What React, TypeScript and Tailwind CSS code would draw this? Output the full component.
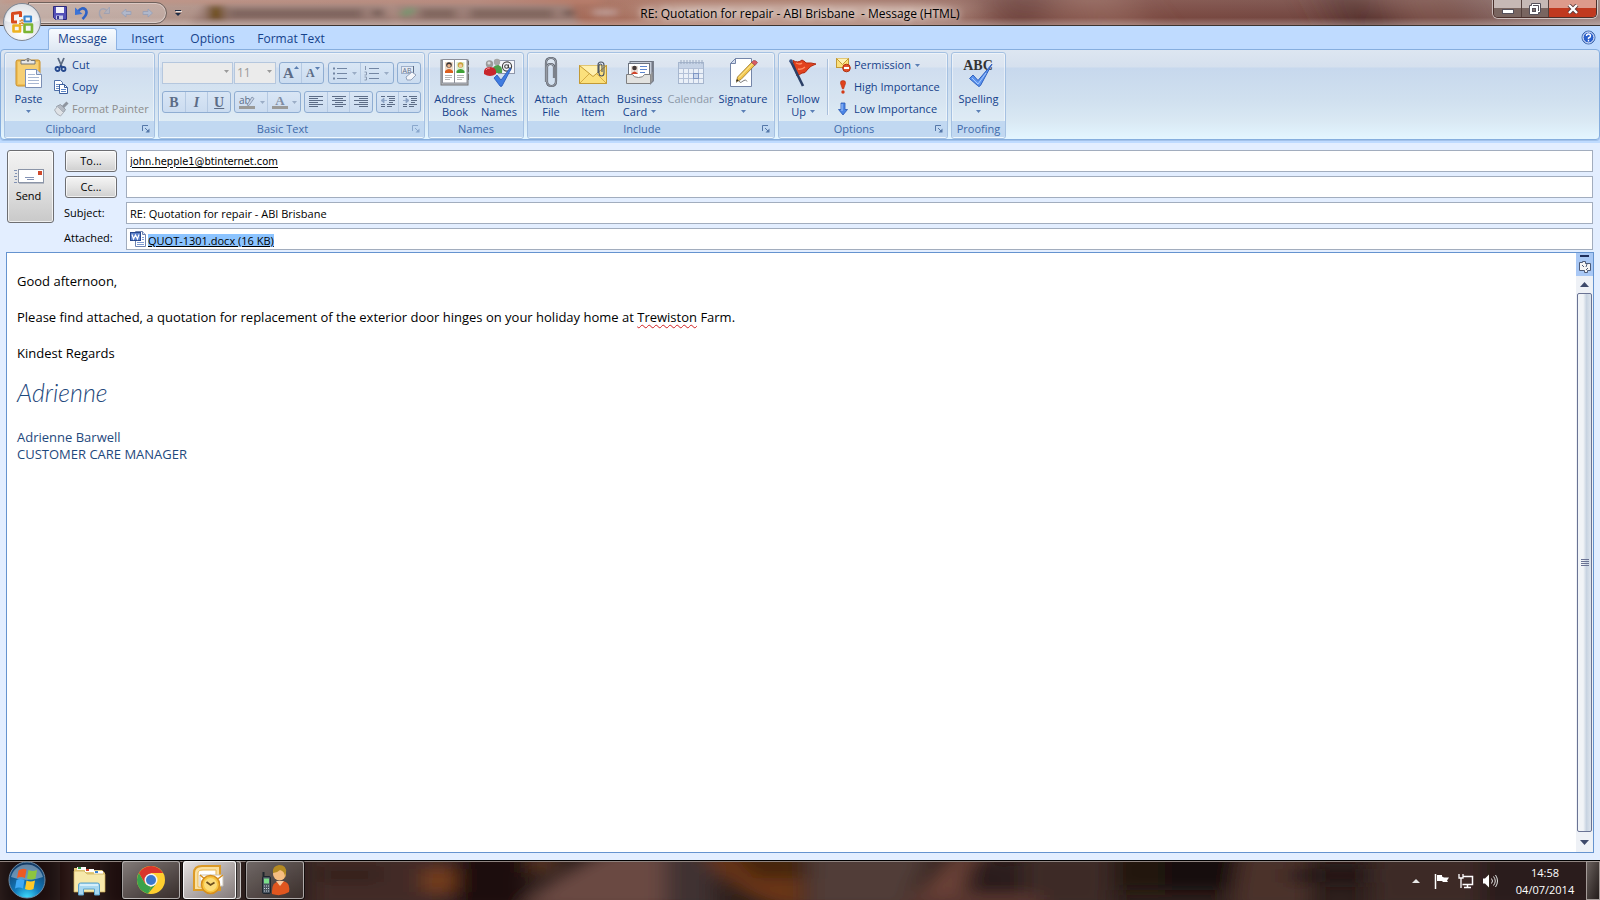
import React from 'react';

type Kids = { children?: React.ReactNode };

const Caret = ({ cls = 'fill-[#5b7fb5]' }: { cls?: string }) => (
  <svg width="5" height="3" viewBox="0 0 5 3" className={cls} aria-hidden="true"><path d="M0 0h5L2.5 3z" /></svg>
);

/* ---------- large ribbon icons ---------- */

const PasteIcon = () => (
  <svg width="32" height="32" viewBox="0 0 32 32" aria-hidden="true">
    <rect x="3" y="3" width="24" height="26" rx="2" fill="#efbe55" stroke="#c98f2b" />
    <rect x="5" y="5" width="20" height="22" fill="#f6cf74" />
    <path d="M8 7V3.500h4Q15-.5 18 3.500h4V7z" fill="#e8e8e8" stroke="#777" />
    <circle cx="15" cy="3.500" r="1.200" fill="#777" />
    <path d="M12.500 12.500h11l5 5V30.500h-16z" fill="#fff" stroke="#7b8fb5" />
    <path d="M23.500 12.500v5h5" fill="#dbe4f3" stroke="#7b8fb5" />
    <path d="M15 17.500h7M15 20.500h11M15 23.500h11M15 26.500h11" stroke="#a9b8d2" />
  </svg>
);

const AddressIcon = () => (
  <svg width="32" height="32" viewBox="0 0 32 32" aria-hidden="true">
    <path d="M27 4h3v4h-3zM27 10h3v5h-3zM27 17h3v6h-3z" fill="#6b6b6b" />
    <rect x="2" y="3" width="27" height="25" fill="#b9bcc2" stroke="#777" />
    <path d="M3.500 2.500H15.500V26H3.500zM15.500 2.500H28V26H15.500z" fill="#fff" stroke="#8b8f98" />
    <rect x="6" y="5" width="8" height="11" fill="#f0dcc8" /><rect x="17.500" y="5" width="8" height="11" fill="#dcefd2" />
    <circle cx="10" cy="8" r="2.800" fill="#3b3432" /><circle cx="10" cy="8.800" r="1.800" fill="#e9b48d" />
    <path d="M6 16v-2q4-4 8 0v2z" fill="#dc5f1e" />
    <circle cx="21.500" cy="8" r="2.800" fill="#c9a13a" /><circle cx="21.500" cy="8.800" r="1.800" fill="#f1c9a0" />
    <path d="M17.500 16v-2q4-4 8 0v2z" fill="#3fa137" />
    <path d="M6 18.500h7M6 20.500h7M6 22.500h5M18 18.500h7M18 20.500h7M18 22.500h5" stroke="#b5b5b5" />
  </svg>
);

const CheckNamesIcon = () => (
  <svg width="32" height="32" viewBox="0 0 32 32" aria-hidden="true">
    <rect x="15.500" y="3.500" width="16" height="13" fill="#f7f7fb" stroke="#8f97ab" />
    <circle cx="24" cy="9.500" r="4.600" fill="none" stroke="#444" strokeWidth="1.100" /><circle cx="23.500" cy="9.500" r="1.800" fill="none" stroke="#444" strokeWidth="1.100" />
    <path d="M25.500 7.500v3.500h2.500" fill="none" stroke="#444" />
    <circle cx="14" cy="5" r="3.200" fill="#a6a6a6" /><path d="M9 16q0-8 6-8 5 1 4 8z" fill="#4d9f4a" />
    <circle cx="6.500" cy="7" r="3.700" fill="#9a9a9a" /><circle cx="6" cy="6" r="1.600" fill="#d8d8d8" />
    <path d="M1 17q-1-7 6-7t6 7q-6 4-12 0z" fill="#c8262c" /><path d="M3 13q1-2 4-2" stroke="#f09090" fill="none" />
    <path d="M11 21l3-3 4 5 9-12 1 1-9 17q-1 1-2 0z" fill="#3f7be0" stroke="#2356b5" strokeWidth=".8" />
  </svg>
);

const ClipPath = "M11 25V6q0-5 5-5t5 5v18q0 5-4.500 5T12 24.500V10q0-3 3.500-3T19 10v11";
const AttachFileIcon = () => (
  <svg width="32" height="32" viewBox="0 0 32 32" aria-hidden="true">
    <path d={ClipPath} fill="none" stroke="#555b66" strokeWidth="2.200" /><path d={ClipPath} fill="none" stroke="#c5cad2" strokeWidth=".7" />
  </svg>
);

const AttachItemIcon = () => (
  <svg width="32" height="32" viewBox="0 0 32 32" aria-hidden="true">
    <rect x="2.500" y="8.500" width="27" height="18" fill="#fbe07c" stroke="#c39a35" />
    <path d="M2.500 26.500l10-10M29.500 26.500l-10-10" stroke="#d6ac45" /><path d="M2.500 8.500L16 19.500 29.500 8.500" fill="#fff0ae" stroke="#c39a35" />
    <path d="M21 16V8q0-3 3-3t3 3v8q0 3-2.500 3T22 16V9q0-2 1.500-2T25 9v6" fill="none" stroke="#4c5563" strokeWidth="1.100" />
  </svg>
);

const BusinessIcon = () => (
  <svg width="32" height="32" viewBox="0 0 32 32" aria-hidden="true">
    <path d="M8 4h22v20l-4 4V8z" fill="#7a808c" /><rect x="6" y="4.500" width="22" height="15" fill="#c7ced9" stroke="#6c7380" />
    <rect x="4.500" y="6.500" width="21" height="15" fill="#fff" stroke="#6c7380" />
    <rect x="7" y="9" width="7" height="8" fill="#e9ddd5" /><circle cx="10.500" cy="11" r="2.300" fill="#443a38" /><path d="M7 17q3.500-5 7 0z" fill="#d1452b" />
    <path d="M16 9.500h7M16 12.500h7M16 15.500h5" stroke="#5c86cf" />
    <path d="M2.500 17.500h6q1 3 6 3t6-3h6v9h-24z" fill="#e2e2e0" stroke="#7f7f80" /><path d="M26.500 17.500l2-3v9l-2 3z" fill="#999" />
  </svg>
);

const CalendarIcon = () => (
  <svg width="32" height="32" viewBox="0 0 32 32" aria-hidden="true">
    <rect x="3.500" y="5.500" width="25" height="21" fill="#eaf0f8" stroke="#a6b6ce" /><path d="M4 6h24v5H4z" fill="#c6d3e6" />
    <path d="M6 3v4M9 3v4M12 3v4M15 3v4M18 3v4M21 3v4M24 3v4M27 3v4" stroke="#9aa9c0" />
    <path d="M4 11.500h24M4 16.500h24M4 21.500h24M8.500 11v15M13.500 11v15M18.500 11v15M23.500 11v15" stroke="#b3c1d8" />
    <rect x="18.500" y="16.500" width="5" height="5" fill="#cad7ec" stroke="#7e96c4" />
  </svg>
);

const SignatureIcon = () => (
  <svg width="32" height="32" viewBox="0 0 32 32" aria-hidden="true">
    <path d="M8.500 1.500h16v28H3.500v-23z" fill="#fff" stroke="#7485a8" /><path d="M3.500 6.500h5v-5z" fill="#d5deee" stroke="#7485a8" />
    <path d="M9 25.500q3-3 3.500-1t3.500-.5 4 .5" fill="none" stroke="#555" strokeWidth=".8" />
    <path d="M10.500 20L25 5l3 3L14 22.500l-4.500 2z" fill="#f3c64c" stroke="#8b6921" strokeWidth=".7" /><path d="M12 20.500L26 6.500" stroke="#fff0a8" />
    <path d="M24.500 5.500l2-2q2.500-.5 4 2L28 8.500z" fill="#d85b62" stroke="#8f3b40" strokeWidth=".6" /><path d="M9 24.500l1-2.500 1.500 1.500z" fill="#222" />
  </svg>
);

const FlagIcon = () => (
  <svg width="32" height="32" viewBox="0 0 32 32" aria-hidden="true">
    <path d="M6 3.500q5 3 9-.5 4 2 4 3 5-.5 10 1-6 2-8 5-3 5-6 4-3 2-5 3z" fill="#e2421e" stroke="#b2290f" />
    <path d="M9 6q4 2 6 0M11 12q4 1 7-2" stroke="#ff8b62" strokeWidth="1.300" fill="none" />
    <path d="M3.500 3.500L16 29" stroke="#2b3f66" strokeWidth="2.600" /><circle cx="4" cy="4" r="1.800" fill="#3c5585" />
  </svg>
);

const SpellIcon = () => (
  <svg width="34" height="32" viewBox="0 0 34 32" aria-hidden="true">
    <text x="16" y="13" textAnchor="middle" fontFamily="Liberation Serif, serif" fontWeight="700" fontSize="14" fill="#333">ABC</text>
    <path d="M7.500 21.500l3.500-3.500 5 5.500 14-16.500-11.500 21.500q-1.500 2-3 0z" fill="#5b93ee" stroke="#2f60bd" /><path d="M10 21l6 6 8-11" stroke="#a5c8ff" fill="none" />
  </svg>
);

/* ---------- small ribbon icons ---------- */

const S = ({ children }: Kids) => <svg width="16" height="16" viewBox="0 0 16 16" aria-hidden="true" className="shrink-0">{children}</svg>;

const CutIcon = () => (
  <S><path d="M4 1l4 9M10 1L6 10" stroke="#5d6b82" strokeWidth="1.800" /><circle cx="3.500" cy="12" r="2" fill="none" stroke="#26498e" strokeWidth="1.800" /><circle cx="9.500" cy="12" r="2" fill="none" stroke="#26498e" strokeWidth="1.800" /><path d="M5 11l3-2M8.500 10.500L6 8.500" stroke="#26498e" strokeWidth="1.500" /></S>
);
const CopyIcon = () => (
  <S><path d="M.5 1.500h6l2 2v8h-8z" fill="#fff" stroke="#4e6fa8" /><path d="M2 5.500h4M2 7.500h4M2 9.500h3" stroke="#6e8fc4" /><path d="M5.500 5.500h5l3 3v6h-8z" fill="#fff" stroke="#3c5f9d" /><path d="M10.500 5.500v3h3" fill="none" stroke="#3c5f9d" /><path d="M7 10.500h5M7 12.500h5" stroke="#5b84c6" /></S>
);
const PainterIcon = () => (
  <S><path d="M13.500 1.500l-5 5" stroke="#8e959f" strokeWidth="3" /><path d="M6.500 3.500l5 5-2 3-7-6z" fill="#b4bac3" stroke="#979ea9" /><path d="M3.500 5.500l6 6-3 3.500q-4-1-6-6z" fill="#dfe2e6" stroke="#aab0b9" /></S>
);
const PermissionIcon = () => (
  <S><rect x=".5" y="1.500" width="12" height="9" fill="#fbdf7b" stroke="#c39a35" /><path d="M.5 1.500l6 6 6-6" fill="#fff2b5" stroke="#c39a35" /><circle cx="10.500" cy="11" r="3.800" fill="#e2502c" stroke="#b0310f" /><path d="M8 11h5" stroke="#fff" strokeWidth="2" /></S>
);
const HighIcon = () => (
  <S><path d="M7 1.500q3 0 2.500 3L7.500 10h-1L4.500 4.500q-.5-3 2.500-3z" fill="#e0431d" stroke="#b5310f" strokeWidth=".6" /><circle cx="7" cy="13" r="1.700" fill="#d23a17" /></S>
);
const LowIcon = () => (
  <S><path d="M5 2h4v6.500h2.500L7 14 2.500 8.500H5z" fill="#4c86e6" stroke="#2a58b4" strokeWidth=".8" /><path d="M6 3v7" stroke="#a6c7ff" /></S>
);
const Launcher = ({ dim }: { dim?: boolean }) => (
  <svg width="8" height="8" viewBox="0 0 8 8" className={dim ? 'opacity-50' : ''} aria-hidden="true"><path d="M.5 6V.500H6M3 3l3.500 3.500" stroke="#5577a8" fill="none" /><path d="M7.500 3.500v4h-4z" fill="#5577a8" /></svg>
);
const Bullets = ({ num }: { num?: boolean }) => (
  <S><path d="M5 3.500h10M5 8.500h10M5 13.500h10" stroke="#7386a3" />{num ? <path d="M1.500 1v4M.5 7h2v3h-2M.5 12h2v3h-2" stroke="#8a9ab2" fill="none" /> : <path d="M1 2.500h2v2H1zM1 7.500h2v2H1zM1 12.500h2v2H1z" fill="#7386a3" />}</S>
);
const AlignLeft = () => <S><path d="M1 2.500h14M1 4.500h9M1 6.500h14M1 8.500h9M1 10.500h14M1 12.500h9" stroke="#5c6c86" /></S>;
const AlignCenter = () => <S><path d="M1 2.500h14M4 4.500h8M1 6.500h14M4 8.500h8M1 10.500h14M4 12.500h8" stroke="#5c6c86" /></S>;
const AlignRight = () => <S><path d="M1 2.500h14M6 4.500h9M1 6.500h14M6 8.500h9M1 10.500h14M6 12.500h9" stroke="#5c6c86" /></S>;
const Indent = ({ inc }: { inc?: boolean }) => (
  <S><path d="M1 2.500h4M7 2.500h8M9 4.500h6M9 6.500h6M9 8.500h4M1 10.500h4M7 10.500h8M1 12.500h4M7 12.500h5" stroke="#5c6c86" /><path d={inc ? 'M1 6.500h4M4 4l3 2.500L4 9z' : 'M3 6.500h4M4 4L1 6.500 4 9z'} fill="#8ca2c4" stroke="#8ca2c4" strokeWidth=".8" /></S>
);

/* ---------- ribbon pieces ---------- */

const Group = ({ title, cls, launcher, dim, children }: Kids & { title: string; cls: string; launcher?: boolean; dim?: boolean }) => (
  <section aria-label={title} className={`flex shrink-0 flex-col overflow-hidden rounded-[3px] border border-[#a5c1e2] bg-white/15 shadow-[inset_0_0_0_1px_rgba(255,255,255,0.45)] ${cls}`}>
    <div className="flex h-[68px]">{children}</div>
    <div className={`relative flex h-4 items-center justify-center bg-[#c1d8f1] text-[11px] leading-4 text-[#3e6aaa] ${launcher ? 'pr-[18px]' : ''}`}>
      {title}
      {launcher && <button type="button" aria-label={`${title} dialog`} className="absolute right-1 top-1"><Launcher dim={dim} /></button>}
    </div>
  </section>
);

const Big = ({ icon, a, b, caret, cls, off }: { icon: React.ReactNode; a: string; b?: string; caret?: boolean; cls: string; off?: boolean }) => (
  <button type="button" disabled={off} className={`flex shrink-0 flex-col items-center pt-1 text-[11px] leading-[13px] whitespace-nowrap ${off ? 'text-[#8d99a8]' : 'text-[#15428b]'} ${cls}`}>
    {icon}
    <span className="mt-[3px]">{a}</span>
    {(b || caret) && <span className="flex h-[13px] items-center gap-1">{b}{caret && <Caret />}</span>}
  </button>
);

const Small = ({ icon, label, caret, off }: { icon: React.ReactNode; label: string; caret?: boolean; off?: boolean }) => (
  <button type="button" disabled={off} className={`flex h-[22px] items-center gap-0.5 text-[11px] whitespace-nowrap ${off ? 'text-[#8d8d8d]' : 'text-[#15428b]'}`}>
    {icon}<span>{label}</span>{caret && <span className="pl-0.5"><Caret /></span>}
  </button>
);

const Box = ({ children, cls }: Kids & { cls: string }) => (
  <div className={`flex h-[22px] items-stretch divide-x divide-[#b5c9e2] rounded-[3px] border border-[#8fadd2] bg-linear-to-b from-[#d9e6f5] to-[#cbdcf0] ${cls}`}>{children}</div>
);
const Tool = ({ label, children }: Kids & { label: string }) => (
  <button type="button" disabled aria-label={label} className="flex flex-1 items-center justify-center gap-1 text-[#5c6c86]">{children}</button>
);
const Gray = () => <Caret cls="fill-[#9badc6]" />;

const Ribbon = () => (
  <div className="flex h-[91px] gap-[3px] rounded-[4px] border border-[#86aede] bg-[linear-gradient(to_bottom,#dde6f1_0px,#d5e0ee_17px,#c7d8ed_18px,#d0e0ef_50px,#d9e8f3_70px,#e3f5ff_88px)] px-[3px] pt-0.5 shadow-[0_1px_0_#a3c2ea]">
    <Group title="Clipboard" cls="w-[151px]" launcher>
      <Big icon={<PasteIcon />} a="Paste" caret cls="w-[47px]" />
      <div className="flex flex-col pt-px pl-0.5">
        <Small icon={<CutIcon />} label="Cut" />
        <Small icon={<CopyIcon />} label="Copy" />
        <Small icon={<PainterIcon />} label="Format Painter" off />
      </div>
    </Group>
    <Group title="Basic Text" cls="w-[267px]" launcher dim>
      <div className="flex w-full flex-col gap-[7px] px-[3px] pt-[9px]">
        <div className="flex justify-between">
          <div className="flex gap-px">
            <label className="relative flex">
              <select disabled aria-label="Font" className="h-[22px] w-[71px] appearance-none border border-[#b5c7de] bg-[#ebebeb] opacity-100"><option></option></select>
              <span className="absolute right-1 top-2"><Caret cls="fill-[#9a9a9a]" /></span>
            </label>
            <label className="relative flex">
              <select disabled aria-label="Font size" className="h-[22px] w-[42px] appearance-none border border-[#b5c7de] bg-[#ebebeb] pl-0.5 text-[12px] text-[#9a9a9a] opacity-100"><option>11</option></select>
              <span className="absolute right-1 top-2"><Caret cls="fill-[#9a9a9a]" /></span>
            </label>
          </div>
          <Box cls="w-[45px]">
            <Tool label="Grow font"><span className="flex font-['Liberation_Serif',serif] text-[15px] font-bold">A<svg width="5" height="8" aria-hidden="true"><path d="M0 7h5L2.500 4z" fill="#5c7fb0" /></svg></span></Tool>
            <Tool label="Shrink font"><span className="flex font-['Liberation_Serif',serif] text-[12px] font-bold">A<svg width="5" height="8" aria-hidden="true"><path d="M0 3h5L2.500 6z" fill="#5c7fb0" /></svg></span></Tool>
          </Box>
          <Box cls="w-[66px]">
            <Tool label="Bullets"><Bullets /><Gray /></Tool>
            <Tool label="Numbering"><Bullets num /><Gray /></Tool>
          </Box>
          <Box cls="w-6">
            <Tool label="Clear formatting">
              <svg width="18" height="18" viewBox="0 0 18 18" aria-hidden="true"><rect x="1.500" y="2.500" width="12" height="7" fill="#e4ebf5" stroke="#9fb0ca" /><text x="2.500" y="8.500" fontSize="7" fontFamily="Open Sans, sans-serif" fill="#5c6c86">AB</text><path d="M13.500 2v8" stroke="#5c6c86" /><path d="M6 13l6-5 4 3-5 5H7z" fill="#f4f6fa" stroke="#93a2ba" /></svg>
            </Tool>
          </Box>
        </div>
        <div className="flex justify-between">
          <Box cls="w-[69px]">
            <Tool label="Bold"><b className="font-['Liberation_Serif',serif] text-[14px]">B</b></Tool>
            <Tool label="Italic"><i className="font-['Liberation_Serif',serif] text-[14px] font-bold">I</i></Tool>
            <Tool label="Underline"><u className="font-['Liberation_Serif',serif] text-[14px] font-bold">U</u></Tool>
          </Box>
          <Box cls="w-[67px]">
            <Tool label="Highlight">
              <svg width="18" height="18" viewBox="0 0 18 18" aria-hidden="true"><text x="1" y="11" fontSize="10" fontFamily="Open Sans, sans-serif" fill="#5c6c86">ab</text><path d="M9 12l5-8 2 1.500-5 7z" fill="#c9d5e6" stroke="#7c8ca6" strokeWidth=".8" /><path d="M1 13h16v3H1z" fill="#9a9a98" /></svg><Gray />
            </Tool>
            <Tool label="Font color">
              <svg width="16" height="18" viewBox="0 0 16 18" aria-hidden="true"><text x="8" y="12" textAnchor="middle" fontSize="13" fontWeight="700" fontFamily="Liberation Serif, serif" fill="#7f8ca2">A</text><path d="M0 13h16v3H0z" fill="#9a9a98" /></svg><Gray />
            </Tool>
          </Box>
          <Box cls="w-[69px]">
            <Tool label="Align left"><AlignLeft /></Tool>
            <Tool label="Center"><AlignCenter /></Tool>
            <Tool label="Align right"><AlignRight /></Tool>
          </Box>
          <Box cls="w-[45px]">
            <Tool label="Decrease indent"><Indent /></Tool>
            <Tool label="Increase indent"><Indent inc /></Tool>
          </Box>
        </div>
      </div>
    </Group>
    <Group title="Names" cls="w-24">
      <Big icon={<AddressIcon />} a="Address" b="Book" cls="ml-1 w-11" />
      <Big icon={<CheckNamesIcon />} a="Check" b="Names" cls="w-11" />
    </Group>
    <Group title="Include" cls="w-[248px]" launcher>
      <Big icon={<AttachFileIcon />} a="Attach" b="File" cls="ml-0.5 w-[42px]" />
      <Big icon={<AttachItemIcon />} a="Attach" b="Item" cls="w-[42px]" />
      <Big icon={<BusinessIcon />} a="Business" b="Card" caret cls="w-[51px]" />
      <Big icon={<CalendarIcon />} a="Calendar" cls="w-[51px]" off />
      <Big icon={<SignatureIcon />} a="Signature" caret cls="w-[54px]" />
    </Group>
    <Group title="Options" cls="w-[170px]" launcher>
      <Big icon={<FlagIcon />} a="Follow" b="Up" caret cls="w-12" />
      <div className="my-1.5 w-0.5 border-l border-[#a9bfdb] bg-white/60" />
      <div className="flex flex-col pt-px pl-[7px]">
        <Small icon={<PermissionIcon />} label="Permission" caret />
        <Small icon={<HighIcon />} label="High Importance" />
        <Small icon={<LowIcon />} label="Low Importance" />
      </div>
    </Group>
    <Group title="Proofing" cls="w-[55px]">
      <Big icon={<SpellIcon />} a="Spelling" caret cls="w-full" />
    </Group>
  </div>
);

/* ---------- title bar ---------- */

const TitleGlass = () => (
  <svg className="absolute inset-0 h-full w-full" viewBox="0 0 1600 26" preserveAspectRatio="none" aria-hidden="true">
    <defs>
      <linearGradient id="tg" x1="0" x2="1"><stop offset="0" stopColor="#b39a90" /><stop offset=".3" stopColor="#a88379" /><stop offset=".36" stopColor="#a56a58" /><stop offset=".5" stopColor="#a3705f" /><stop offset=".62" stopColor="#8e6158" /><stop offset=".72" stopColor="#7b4a42" /><stop offset=".88" stopColor="#6f4641" /><stop offset="1" stopColor="#9c8480" /></linearGradient>
      <linearGradient id="tsh" x1="0" x2="0" y1="0" y2="1"><stop offset="0" stopColor="#fff" stopOpacity=".1" /><stop offset=".7" stopColor="#fff" stopOpacity="0" /><stop offset="1" stopColor="#fff" stopOpacity=".25" /></linearGradient>
      <filter id="tb" x="-20%" y="-60%" width="140%" height="220%"><feGaussianBlur stdDeviation="5 3" /></filter>
      <filter id="tb2" x="-20%" y="-60%" width="140%" height="220%"><feGaussianBlur stdDeviation="20 4" /></filter>
    </defs>
    <rect width="1600" height="26" fill="url(#tg)" />
    <g filter="url(#tb)">
      <path d="M205 5h180l10 21H190zM395 5h175l10 21H400z" fill="#9b7d74" /><path d="M0 0h600v2H0z" fill="#c4785f" />
      <rect x="208" y="6" width="16" height="15" fill="#6d4c13" /><rect x="228" y="9" width="135" height="10" fill="#7d625b" /><rect x="373" y="10" width="9" height="7" fill="#65504a" />
      <path d="M401 14l10-7 4 4-10 7z" fill="#5c9a66" /><rect x="420" y="9" width="36" height="10" fill="#7f645c" /><rect x="470" y="9" width="84" height="10" fill="#7f645c" /><rect x="564" y="10" width="9" height="7" fill="#65504a" />
      <rect x="593" y="9" width="24" height="8" fill="#b8938a" />
    </g>
    <g filter="url(#tb2)">
      <path d="M985-6h70l-25 40h-20z" fill="#6b403a" /><path d="M1060-6h60l30 40h-80z" fill="#8d5e54" /><path d="M1325-6h40l30 40h-50z" fill="#54302d" /><path d="M1390-6h60l20 40h-60z" fill="#7d524b" />
      <rect x="650" y="4" width="300" height="18" fill="#c6a89d" />
    </g>
    <rect width="1600" height="26" fill="url(#tsh)" />
  </svg>
);

const OfficeOrb = () => (
  <svg width="40" height="40" viewBox="0 0 40 40" aria-hidden="true">
    <defs><radialGradient id="ob" cx=".5" cy=".8" r=".8"><stop offset="0" stopColor="#fff" /><stop offset=".6" stopColor="#e3e6ec" /><stop offset="1" stopColor="#b4bac6" /></radialGradient></defs>
    <circle cx="20" cy="20" r="18.500" fill="url(#ob)" stroke="#7f8794" /><path d="M3 19a17 17 0 0 1 34 0q-17 5-34 0z" fill="#fff" opacity=".55" />
    <g fill="none" strokeLinejoin="round">
      <path d="M18.500 15V10.500L10.500 11.500v8.500h4.500" stroke="#d8491d" strokeWidth="3" />
      <rect x="22.500" y="14.500" width="6.500" height="5" stroke="#3b87cf" strokeWidth="2.200" />
      <rect x="11.500" y="23.500" width="6.500" height="6" stroke="#eeb21f" strokeWidth="2.600" />
      <rect x="22.500" y="22.500" width="7.500" height="7.500" stroke="#7cb534" strokeWidth="2.600" />
      <path d="M17.500 19h4M20 17v7M17 21.500h6" stroke="#e0862a" strokeWidth="1.500" strokeDasharray="2 1" />
    </g>
  </svg>
);

const TitleBar = () => (
  <header className="relative flex h-[26px] shrink-0 items-start justify-between border-b border-[#3c3430] shadow-[inset_0_-1px_0_#d9cfc9]">
    <TitleGlass />
    <div className="relative ml-7 mt-0.5 flex h-[22px] w-[139px] items-center gap-[6px] rounded-r-full border border-[#6f615c] bg-white/20 pl-[23px] shadow-[inset_0_0_0_1px_rgba(255,255,255,0.35)]">
      <button type="button" aria-label="Save"><S><path d="M1.500 1.500h13v13h-11l-2-2z" fill="#5450b8" stroke="#2c2a7c" /><path d="M4 2h8v6H4z" fill="#f3f3fb" /><path d="M4 10.500h7v4H4z" fill="#c9cbe8" /><path d="M5 11h2v3H5z" fill="#35338a" /></S></button>
      <button type="button" aria-label="Undo"><S><path d="M4 6.500q4-5 7.500-2 3 4-3 9.500" fill="none" stroke="#2e62c5" strokeWidth="2.600" /><path d="M1 2.500v7.500l7.500-1z" fill="#3c73d6" /></S></button>
      <button type="button" disabled aria-label="Redo" className="opacity-50"><S><path d="M11 5.500q-4-3.500-7 0-2 4 2 8" fill="none" stroke="#8299bd" strokeWidth="1.500" /><path d="M13.500 2v6.500H8z" fill="#a3b5d2" stroke="#8299bd" /></S></button>
      <button type="button" disabled aria-label="Previous" className="opacity-70"><S><path d="M8 4v2.500h5v3H8V12L3.500 8z" fill="#a9bddb" stroke="#7e96bd" strokeWidth=".7" /></S></button>
      <button type="button" disabled aria-label="Next" className="opacity-70"><S><path d="M8 4v2.500H3v3h5V12l4.500-4z" fill="#a9bddb" stroke="#7e96bd" strokeWidth=".7" /></S></button>
    </div>
    <button type="button" aria-label="Customize toolbar" className="relative ml-2 mt-2.5 mr-auto"><svg width="7" height="8" viewBox="0 0 7 8" aria-hidden="true"><path d="M0 .5h6" stroke="#1d2b44" /><path d="M0 3h6L3 6z" fill="#1d2b44" /><path d="M1 1.500h6" stroke="#fff" opacity=".7" /></svg></button>
    <h1 className="pointer-events-none absolute inset-x-0 top-[5px] text-center text-[12px] leading-[18px] whitespace-pre text-black [text-shadow:0_0_6px_#fff]">RE: Quotation for repair - ABI Brisbane  - Message (HTML)</h1>
    <div className="relative mr-[3px] flex h-[18px] overflow-hidden rounded-b-[5px] border border-t-0 border-[#4a2f2b] shadow-[0_0_0_1px_rgba(255,255,255,0.55)]">
      <button type="button" aria-label="Minimize" className="flex w-7 items-center justify-center border-r border-[#55403c] bg-linear-to-b from-[#c6b8b5] from-45% to-[#796560] to-50%"><svg width="12" height="12" aria-hidden="true"><rect x=".5" y="6.500" width="11" height="4" fill="#fff" stroke="#55505a" /></svg></button>
      <button type="button" aria-label="Restore" className="flex w-[27px] items-center justify-center border-r border-[#55403c] bg-linear-to-b from-[#c6b8b5] from-45% to-[#796560] to-50%"><svg width="12" height="12" viewBox="0 0 12 12" aria-hidden="true"><path d="M2.500.500h9v9h-2v2h-9v-9h2z" fill="#fff" stroke="#55505a" /><rect x="3.500" y="5.500" width="3" height="3" fill="#867470" stroke="#55505a" /><path d="M4 2.500h5.500V8" stroke="#55505a" fill="none" /></svg></button>
      <button type="button" aria-label="Close" className="flex w-[47px] items-center justify-center bg-linear-to-b from-[#dd9a8b] from-45% to-[#c0391f] to-50%"><svg width="12" height="10" viewBox="0 0 12 10" aria-hidden="true"><path d="M2 1l8 8M10 1L2 9" stroke="#5a3a3a" strokeWidth="4" /><path d="M2 1l8 8M10 1L2 9" stroke="#fff" strokeWidth="2.400" /></svg></button>
    </div>
    <button type="button" aria-label="Office button" className="absolute left-0.5 top-0.5 z-10"><OfficeOrb /></button>
  </header>
);

const tabs: { name: string; cls: string }[] = [
  { name: 'Insert', cls: 'w-[61px]' },
  { name: 'Options', cls: 'w-[69px]' },
  { name: 'Format Text', cls: 'w-[88px]' },
];

const Tabs = () => (
  <nav className="flex h-[23px] items-end bg-[#bfdbff] pl-12 text-[12px] text-[#15428b]">
    <button type="button" className="relative z-[1] -mb-px h-[22px] w-[69px] rounded-t-[3px] border border-b-0 border-[#8db2e3] bg-linear-to-b from-[#f7fbff] to-[#dfe8f3] pb-px">Message</button>
    {tabs.map((t) => <button key={t.name} type="button" className={`h-5 ${t.cls}`}>{t.name}</button>)}
    <button type="button" aria-label="Help" className="ml-auto mr-1 mb-1">
      <svg width="15" height="15" viewBox="0 0 15 15" aria-hidden="true"><circle cx="7.500" cy="7.500" r="6.500" fill="#2a5fcb" stroke="#3d68ad" /><circle cx="7.500" cy="7.500" r="5.500" fill="none" stroke="#fff" /><path d="M5.500 6q0-2 2-2t2 1.800-2 2.200v1.200M7.500 10v1.500" fill="none" stroke="#fff" strokeWidth="1.400" /></svg>
    </button>
  </nav>
);

/* ---------- message header ---------- */

const fieldCls = 'flex h-[22px] w-full min-w-0 items-center border border-[#a2adbe] bg-white px-[3px]';
const pushCls = "h-[22px] w-[52px] rounded-[3px] border border-[#6d6e72] bg-linear-to-b from-[#f5f5f5] via-[#e4e4e4] to-[#cfcfcf] shadow-[inset_0_0_0_1px_rgba(255,255,255,0.7)]";

const WordIcon = () => (
  <S><path d="M5.500.500h7l3 3v12h-10z" fill="#fff" stroke="#6d83b0" /><path d="M12.500.500v3h3" fill="#d7e0f2" stroke="#6d83b0" /><path d="M7 11.500h7M7 13.500h7M12 6.500h2M12 8.500h2" stroke="#7f9cd2" /><rect x=".5" y="1.500" width="10" height="8" fill="#5f83cb" stroke="#27488f" /><path d="M2 3.500l1.500 4.500L5.500 4l2 4L9 3.500" fill="none" stroke="#fff" strokeWidth="1.200" /></S>
);

const Fields = () => (
  <form className="flex gap-[10px] px-[7px] pt-[7px] text-[11px] text-black" onSubmit={(e) => e.preventDefault()}>
    <button type="submit" className="flex h-[73px] w-[47px] shrink-0 flex-col items-center justify-center rounded-[3px] border border-[#6d6e72] bg-linear-to-b from-[#f3f3f3] from-0% via-[#e2e2e2] via-48% to-[#c9c9c9] pr-1 shadow-[inset_0_0_0_1px_rgba(255,255,255,0.7)]">
      <svg width="30" height="15" viewBox="0 0 30 15" aria-hidden="true"><rect x="4.500" y=".5" width="25" height="13" fill="#fff" stroke="#8b95a8" /><path d="M5 14.500h25" stroke="#b5b9c2" /><rect x="24" y="2" width="4" height="4" fill="#cf4a2c" /><path d="M11 8.500h9M13 10.500h7" stroke="#8292b5" /><path d="M0 1.500h3M1 4.500h2M0 7.500h3M1 10.500h2M0 13.500h3" stroke="#8292b5" /></svg>
      <span className="mt-1">Send</span>
    </button>
    <div className="grid min-w-0 flex-1 grid-cols-[53px_1fr] items-center gap-x-[9px] gap-y-1">
      <button type="button" className={`justify-self-end ${pushCls}`}>To...</button>
      <input aria-label="To" defaultValue="john.hepple1@btinternet.com" className={`${fieldCls} font-['DejaVu_Sans_Condensed','Open_Sans',sans-serif] underline underline-offset-2`} />
      <button type="button" className={`justify-self-end ${pushCls}`}>Cc...</button>
      <input aria-label="Cc" defaultValue="" className={fieldCls} />
      <label htmlFor="subject">Subject:</label>
      <input id="subject" defaultValue="RE: Quotation for repair - ABI Brisbane" className={fieldCls} />
      <span className="pb-0.5">Attached:</span>
      <div className={fieldCls}>
        <WordIcon />
        <a href="#attachment" className="mt-0.5 ml-0.5 bg-[#8cc4ff] leading-[13px] whitespace-nowrap underline underline-offset-1">QUOT-1301.docx (16 KB)</a>
      </div>
    </div>
  </form>
);

const Body = () => (
  <main className="mx-1.5 mb-[7px] mt-0.5 flex min-h-[300px] flex-1 border border-[#6593cf] bg-white">
    <div contentEditable suppressContentEditableWarning role="textbox" aria-label="Message body" className="flex-1 px-2.5 pt-[19px] font-['Open_Sans',sans-serif] text-[13px] leading-[18px] text-black outline-none">
      <p>Good afternoon,</p>
      <p className="mt-[18px]">Please find attached, a quotation for replacement of the exterior door hinges on your holiday home at <span className="underline decoration-[#d02020] decoration-wavy decoration-1 underline-offset-2">Trewiston</span> Farm.</p>
      <p className="mt-[18px]">Kindest Regards</p>
      <p className="mt-3.5 font-['Bradley_Hand_ITC','Lato',sans-serif] text-[25px] leading-[32px] font-light text-[#1f497d] italic">Adrienne</p>
      <p className="mt-[21px] leading-[17px] text-[#1f497d]">Adrienne Barwell</p>
      <p className="leading-[17px] text-[#1f497d]">CUSTOMER CARE MANAGER</p>
    </div>
    <div className="flex w-[17px] shrink-0 flex-col items-center bg-[#eef1f6]">
      <div className="flex h-[23px] w-full flex-col items-center bg-[#a9c8f5] pt-0.5">
        <span className="h-0.5 w-[9px] bg-[#1f2f5c]" />
        <svg width="14" height="14" viewBox="0 0 14 14" className="mt-[3px]" aria-hidden="true"><path d="M1.500 2.500h3v-1h3v2h5v7h-3v2h-3v-2h-5z" fill="#f5f5f5" stroke="#4d5a76" /><path d="M4 5l2 2M9 4l-1 3M8 10l2-2" stroke="#4d5a76" /></svg>
      </div>
      <button type="button" aria-label="Scroll up" className="flex h-[17px] w-full items-center justify-center"><svg width="9" height="5" aria-hidden="true"><path d="M0 5L4.500 0 9 5z" fill="#3e4a6b" /></svg></button>
      <div className="flex w-[15px] flex-1 flex-col items-center justify-center gap-px rounded-[2px] border border-[#6a7394] bg-linear-to-r from-[#f1f4f7] from-40% via-[#c7d3e1] via-65% to-[#dde5ee]">
        {[0, 1, 2, 3].map((i) => <span key={i} className="h-px w-2 bg-[#6a7394]" />)}
      </div>
      <button type="button" aria-label="Scroll down" className="flex h-[20px] w-full items-center justify-center"><svg width="9" height="5" aria-hidden="true"><path d="M0 0l4.500 5L9 0z" fill="#3e4a6b" /></svg></button>
    </div>
  </main>
);

/* ---------- taskbar ---------- */

const Wallpaper = () => (
  <svg className="absolute inset-0 h-full w-full" viewBox="0 0 1600 40" preserveAspectRatio="none" aria-hidden="true">
    <defs><filter id="wb" x="-10%" y="-50%" width="120%" height="200%"><feGaussianBlur stdDeviation="11 7" /></filter></defs>
    <rect width="1600" height="40" fill="#2d1f1c" />
    <g filter="url(#wb)">
      <path d="M0-10h60v60H0zM100-10h60v60h-60z" fill="#1b100e" /><path d="M310-10h150v60H310z" fill="#432c27" /><path d="M320 10h60v8h-60z" fill="#21150f" />
      <path d="M425 8h28v24h-28z" fill="#7a3f1e" /><path d="M458-10h70v60h-75z" fill="#1c100f" /><path d="M530-10h25v22h-25z" fill="#5a3522" /><path d="M545 26l60-36h75v60H520z" fill="#6b4842" />
      <path d="M665-10h50v60h-50z" fill="#3f3031" /><path d="M708-10h96v60q-60-5-96-50z" fill="#6a3416" /><path d="M730-10h74v28h-50z" fill="#46260e" />
      <path d="M808-10h125l-30 60h-95z" fill="#513c39" /><path d="M905 50l50-60h30l-30 60z" fill="#6c4239" /><path d="M970 0h50v50h-60z" fill="#2c1c1c" /><path d="M1022-10h90v60h-90z" fill="#3c2a28" /><path d="M910 34h130v16H910z" fill="#5c3931" /><path d="M1115-10h120v40h-120z" fill="#21130f" /><path d="M1165-10h74v40h-74z" fill="#160b0a" />
      <path d="M1240-10h70v60h-80z" fill="#4b302a" /><path d="M1290 8h80v14h-80z" fill="#221614" /><path d="M1370-10h110v60h-110z" fill="#3d2a27" /><path d="M1480-10h130v60h-130z" fill="#2b1d1b" />
    </g>
  </svg>
);

const taskCls = 'flex h-[38px] items-center justify-center rounded-[3px] border border-white/50 shadow-[0_0_0_1px_rgba(0,0,0,0.6)]';

const Taskbar = () => (
  <footer className="relative flex h-10 shrink-0 items-start border-t border-black text-white">
    <Wallpaper />
    <div className="relative flex h-full w-full items-start shadow-[inset_0_1px_0_#8f8480]">
      <button type="button" aria-label="Start" className="ml-2">
        <svg width="38" height="38" viewBox="0 0 38 38" aria-hidden="true">
          <defs><radialGradient id="so" cx=".5" cy="1" r=".95"><stop offset="0" stopColor="#3fe0ff" /><stop offset=".4" stopColor="#1279bb" /><stop offset="1" stopColor="#123a66" /></radialGradient></defs>
          <circle cx="19" cy="19" r="18" fill="url(#so)" stroke="#6d8ba6" /><path d="M3 16a16.500 16.500 0 0 1 32 0q-16 6-32 0z" fill="#b9cfe2" opacity=".5" />
          <path d="M10.500 9.500q4-3 8-1L17 17q-4-2-8 0z" fill="#ee5a24" /><path d="M20.500 9q4 2 8.500 0l-1.500 8.500q-4 2-8.500 0z" fill="#8dc63f" />
          <path d="M8.500 19q4-2 8 0L15 27.500q-4-2-8 0z" fill="#3fa9f5" /><path d="M18.500 19.500q4 2 8.500 0L25.500 28q-4 2-8.500 0z" fill="#ffc928" />
        </svg>
      </button>
      <button type="button" aria-label="Windows Explorer" className="ml-[26px] mt-1">
        <svg width="34" height="32" viewBox="0 0 34 32" aria-hidden="true">
          <path d="M2 3h10l2 2h16l3 3v19H2z" fill="#e3cc7c" /><path d="M5 2h9v3H5z" fill="#fff" /><path d="M6 2h3v2H6z" fill="#2d9e48" /><path d="M13 4h9v3h-9z" fill="#fff" /><path d="M14 4h3v2h-3z" fill="#d3402c" /><path d="M22 6h9v3h-9z" fill="#fff" /><path d="M23 6h3v2h-3z" fill="#3b84cf" />
          <path d="M2 6h10l3 3h18v18H2z" fill="#f6e9ab" stroke="#c9ad58" strokeWidth=".7" />
          <path d="M6.500 30V20q0-2 2-2h17q2 0 2 2v10h-5v-6h-11v6z" fill="#a7d8f0" stroke="#5ba3cc" /><path d="M8 20h18" stroke="#e3f6ff" strokeWidth="1.500" />
        </svg>
      </button>
      <button type="button" aria-label="Google Chrome" className={`${taskCls} ml-4 w-[58px] bg-linear-to-br from-[#8d8785]/90 to-[#3c3331]/80`}>
        <svg width="30" height="30" viewBox="0 0 30 30" aria-hidden="true">
          <circle cx="15" cy="15" r="14" fill="#ffcf2f" /><path d="M2.900 8A14 14 0 0 1 27.100 8H15L9 18.500z" fill="#d9362b" /><path d="M2.900 8L9 18.500 15 22l-3 6.700A14 14 0 0 1 2.900 8z" fill="#3aa14b" /><path d="M12 28.700L20.500 18.500 15 22z" fill="#3aa14b" />
          <circle cx="15" cy="15" r="6.500" fill="#f3f3f3" /><circle cx="15" cy="15" r="5" fill="#3a78cc" />
        </svg>
      </button>
      <div className="ml-[3px] flex">
        <button type="button" aria-label="Outlook" className={`${taskCls} z-[1] w-[53px] border-white/90 bg-linear-to-br from-[#e6e2e1] to-[#847b7a] pr-1`}>
          <svg width="32" height="30" viewBox="0 0 32 30" aria-hidden="true">
            <path d="M2 8q0-7 8-7h18v24H2z" fill="#fae0a0" stroke="#dc9a26" strokeWidth="2" /><path d="M6 8q0-3 5-3h13v17H6z" fill="#fff" stroke="#e8b44e" />
            <path d="M8 10h23v11H8z" fill="#fff" stroke="#c7c1b5" /><path d="M8 10l11 9 12-9" fill="none" stroke="#d68f1e" strokeWidth="1.500" />
            <circle cx="18.500" cy="19.500" r="9" fill="#f7c440" stroke="#d68f1e" strokeWidth="1.500" /><circle cx="18.500" cy="19.500" r="6.500" fill="#fbdc7b" /><path d="M14.500 17l4 3 4-2.500" fill="none" stroke="#6b4c1d" strokeWidth="1.800" />
          </svg>
        </button>
        <span className="-ml-0.5 h-[38px] w-[7px] rounded-r-[3px] border border-white/60 bg-[#6d6462]" />
      </div>
      <button type="button" aria-label="Contacts" className={`${taskCls} ml-[5px] w-[58px] bg-linear-to-br from-[#77706e]/90 to-[#3f3431]/80`}>
        <svg width="30" height="32" viewBox="0 0 30 32" aria-hidden="true">
          <path d="M12 30q-1-13 9-13t8 11q-8 5-17 2z" fill="#e0561f" /><path d="M16 17l4 5 4-5z" fill="#f5c9a0" /><circle cx="19.500" cy="10" r="6.500" fill="#f6bd81" /><path d="M13 9q-1-7 6-8 8 0 7 8l-1 5q0-7-5-8-3 3-7 3z" fill="#b48a22" />
          <rect x="2.500" y="12.500" width="8" height="17" rx="1.500" fill="#4a5560" stroke="#1e262d" /><path d="M3.500 8v5" stroke="#1e262d" strokeWidth="2" /><rect x="4" y="14.500" width="5" height="5" fill="#7be08a" /><path d="M4 22h5M4 24.500h5M4 27h5" stroke="#c9d2d9" strokeDasharray="1 1" />
        </svg>
      </button>
      <div className="ml-auto flex h-full items-center">
        <button type="button" aria-label="Show hidden icons"><svg width="8" height="4" aria-hidden="true"><path d="M0 4l4-4 4 4z" fill="#e8e8e8" /></svg></button>
        <svg width="16" height="16" viewBox="0 0 16 16" className="ml-3.5" aria-hidden="true"><path d="M1.500 1v15" stroke="#fff" strokeWidth="1.500" /><path d="M3 2h5v1.500l2 1h5l-2 3 1 1.500H9L8 8H3z" fill="#fff" /></svg>
        <svg width="16" height="16" viewBox="0 0 16 16" className="ml-2" aria-hidden="true"><path d="M5 3.500h9.500v8H4.500M9.500 12v2.500M6 14.500h7" fill="none" stroke="#fff" strokeWidth="1.500" /><path d="M1 1v4h4V1M3 5v10" fill="none" stroke="#fff" strokeWidth="1.300" /></svg>
        <svg width="16" height="16" viewBox="0 0 16 16" className="ml-2" aria-hidden="true"><path d="M1 5.500h2l4-4v13l-4-4H1z" fill="#fff" /><path d="M9.500 5.500q2 2.500 0 5M11.500 3.500q3.500 4.500 0 9M13.500 2q4 6 0 12" fill="none" stroke="#e4e4e4" /></svg>
        <time className="ml-2.5 flex w-[74px] flex-col items-center text-[11px] leading-[17px]"><span>14:58</span><span>04/07/2014</span></time>
        <button type="button" aria-label="Show desktop" className="ml-1 h-full w-3.5 border border-[#a49b98] bg-linear-to-br from-[#6b625f] to-[#241c1a]" />
      </div>
    </div>
  </footer>
);

export default function App() {
  return (
    <div className="flex min-h-screen flex-col bg-[#e3eeff] font-['Open_Sans','Noto_Sans',sans-serif]">
      <TitleBar />
      <div className="bg-[#bfdbff] pb-[3px]">
        <Tabs />
        <Ribbon />
      </div>
      <Fields />
      <Body />
      <Taskbar />
    </div>
  );
}
